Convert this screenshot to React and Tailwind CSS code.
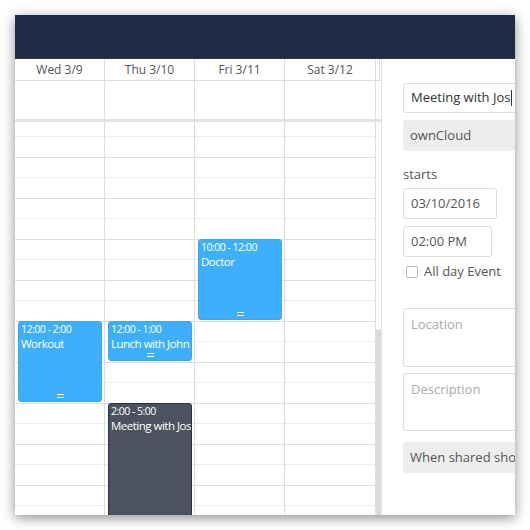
import React from 'react';

const days = ['Wed 3/9', 'Thu 3/10', 'Fri 3/11', 'Sat 3/12'];

// top offsets are relative to the scrolled time grid (41px per hour)
const events = [
  { day: 0, top: 199, height: 81, time: '12:00 - 2:00', title: 'Workout', dark: false },
  { day: 1, top: 199, height: 40, time: '12:00 - 1:00', title: 'Lunch with John', dark: false },
  { day: 1, top: 281, height: 160, time: '2:00 - 5:00', title: 'Meeting with Jos', dark: true },
  { day: 2, top: 117, height: 81, time: '10:00 - 12:00', title: 'Doctor', dark: false },
];

function Handle() {
  return (
    <div className="absolute bottom-[3px] left-0 right-0 flex justify-center">
      <div className="w-[7px] h-[4px] border-y border-white" />
    </div>
  );
}

function EventBox({ ev }) {
  return (
    <div
      className={
        ev.dark
          ? 'absolute left-[3px] right-[2px] rounded-[3px] bg-[#4c5262] border border-[#2c3039] text-white px-[2px] overflow-hidden'
          : 'absolute left-[3px] right-[2px] rounded-[3px] bg-[#3eaffc] border border-[#3aa6f0] text-white px-[2px] overflow-hidden'
      }
      style={{ top: ev.top, height: ev.height }}
    >
      <div className="text-[10.5px] leading-[13px] tracking-[-0.5px] pt-[1px]">{ev.time}</div>
      <div className="text-[11.5px] leading-[15px] tracking-[-0.5px] whitespace-nowrap">{ev.title}</div>
      {!ev.dark && <Handle />}
    </div>
  );
}

function DayColumn({ index, wide }) {
  return (
    <div className={(wide ? 'w-[91px]' : 'w-[90px]') + ' relative border-r border-[#ddd] h-full'}>
      <div className="-mt-[5px]">
        {Array.from({ length: 11 }).map((_, i) => (
          <div key={i} className="h-[41px] border-b border-[#ddd]">
            <div className="h-[20px] border-b border-dotted border-[#ddd]" />
          </div>
        ))}
      </div>
      {events
        .filter((e) => e.day === index)
        .map((e) => (
          <EventBox key={e.title} ev={e} />
        ))}
    </div>
  );
}

export default function App() {
  return (
    <div className="w-[530px] h-[530px] bg-white p-[15px] font-['Open_Sans',sans-serif]">
      <div className="w-[500px] h-[500px] flex flex-col overflow-hidden bg-white shadow-[0_3px_12px_rgba(0,0,0,0.45)]">
        <div className="h-[44px] shrink-0 bg-[#1d2b44] border-b border-[#2a3a55]" />

        <div className="flex flex-1 min-h-0">
          {/* calendar */}
          <div className="w-[366px] shrink-0 flex flex-col">
            <div className="h-[22px] shrink-0 flex border-b border-[#ddd]">
              {days.map((d, i) => (
                <div
                  key={d}
                  className={
                    (i === 3 ? 'w-[91px]' : 'w-[90px]') +
                    ' border-r border-[#ddd] text-center text-[12px] leading-[21px] text-[#555]'
                  }
                >
                  {d}
                </div>
              ))}
              <div className="w-[4px] border-r border-[#ddd]" />
            </div>
            <div className="h-[38px] shrink-0 flex">
              {days.map((d, i) => (
                <div key={d} className={(i === 3 ? 'w-[91px]' : 'w-[90px]') + ' border-r border-[#ddd]'} />
              ))}
            </div>
            <div className="h-[3px] shrink-0 bg-[#e3e3e3]" />
            <div className="flex flex-1 min-h-0 overflow-hidden text-white">
              {days.map((d, i) => (
                <DayColumn key={d} index={i} wide={i === 3} />
              ))}
              <div className="w-[5px] flex flex-col">
                <div className="h-[207px] shrink-0" />
                <div className="flex-1 bg-[#dcdcdc] rounded-t-[2px]" />
              </div>
            </div>
          </div>

          {/* side panel */}
          <div className="flex-1 min-w-0 border-l border-[#e2e2e2] pl-[21px] pt-[24px] overflow-hidden text-[13px] text-[#555]">
            <div className="w-[150px] h-[30px] border border-[#ddd] rounded-[3px] px-[7px] flex items-center text-[#333]">
              Meeting with Jo<span>s</span>
              <span className="w-px h-[16px] bg-[#333] ml-px" />
            </div>
            <div className="w-[150px] h-[31px] mt-[7px] bg-[#ededed] rounded-[3px] px-[7px] flex items-center">
              ownCloud
            </div>
            <div className="mt-[14px] h-[18px] leading-[18px]">starts</div>
            <div className="w-[94px] h-[31px] mt-[5px] border border-[#ddd] rounded-[3px] px-[7px] flex items-center">
              03/10/2016
            </div>
            <div className="w-[89px] h-[31px] mt-[7px] border border-[#ddd] rounded-[3px] px-[7px] flex items-center">
              02:00 PM
            </div>
            <div className="mt-[7px] flex items-center h-[16px]">
              <div className="ml-[3px] w-[12px] h-[12px] border border-[#bbb] rounded-[2px] bg-white" />
              <span className="ml-[6px]">All day Event</span>
            </div>
            <div className="w-[150px] h-[59px] mt-[28px] border border-[#ddd] rounded-[3px] px-[7px] pt-[6px] text-[#aaa]">
              Location
            </div>
            <div className="w-[150px] h-[58px] mt-[6px] border border-[#ddd] rounded-[3px] px-[7px] pt-[6px] text-[#aaa]">
              Description
            </div>
            <div className="w-[150px] h-[31px] mt-[11px] bg-[#ededed] rounded-[3px] px-[7px] flex items-center whitespace-nowrap">
              When shared show full event
            </div>
          </div>
        </div>
      </div>
    </div>
  );
}
